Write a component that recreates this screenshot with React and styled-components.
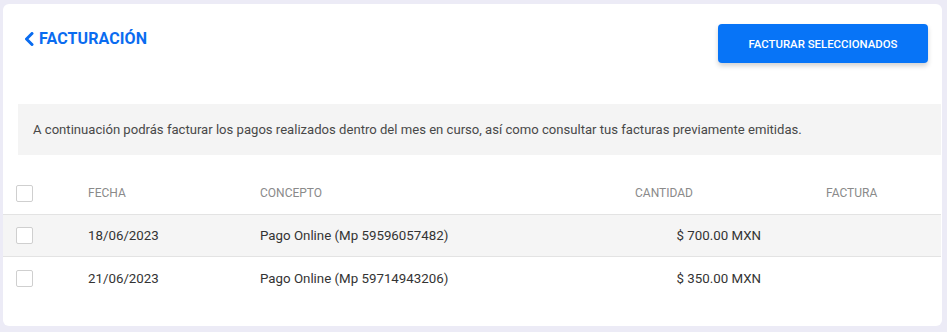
import React from "react";
import styled, { createGlobalStyle } from "styled-components";

const Global = createGlobalStyle`
  html, body { margin: 0; padding: 0; background: #ecebf6; }
  body { font-family: Roboto, "Noto Sans", sans-serif; }
  * { box-sizing: border-box; }
`;

const Page = styled.div`
  padding: 4px 5px 6px 3px;
  height: 332px;
`;

const Card = styled.div`
  background: #fff;
  border-radius: 6px;
  height: 322px;
  padding-top: 20px;
  overflow: hidden;
`;

const Top = styled.div`
  display: flex;
  justify-content: space-between;
  align-items: flex-start;
  padding: 0 14px 0 21px;
  height: 80px;
`;

const Title = styled.a`
  display: flex;
  align-items: center;
  gap: 5px;
  margin-top: 5px;
  color: #0a6cf0;
  font-weight: 700;
  font-size: 16px;
  letter-spacing: 0.1px;
  text-decoration: none;
`;

const Button = styled.button`
  width: 210px;
  height: 39px;
  border: none;
  border-radius: 4px;
  background: #0774f7;
  color: #fff;
  font-family: inherit;
  font-size: 11.4px;
  font-weight: 500;
  box-shadow: 0 3px 5px rgba(0, 0, 0, 0.18);
`;

const Info = styled.div`
  margin: 0 1px 0 15px;
  background: #f4f4f4;
  height: 51px;
  display: flex;
  align-items: center;
  padding-left: 15px;
  font-size: 13.1px;
  color: #484848;
`;

const Table = styled.div`
  margin-top: 22px;
  margin-right: 1px;
`;

const Row = styled.div`
  display: grid;
  grid-template-columns: 72px 172px 310px 191px 1fr;
  align-items: center;
  height: ${(p) => (p.$head ? "38px" : "42px")};
  padding-left: 13px;
  padding-bottom: ${(p) => (p.$head ? "5px" : "0")};
  background: ${(p) => (p.$shade ? "#f5f5f5" : "#fff")};
  border-bottom: ${(p) => (p.$last ? "none" : "1px solid #e3e3e3")};
  font-size: ${(p) => (p.$head ? "12px" : "13.3px")};
  color: ${(p) => (p.$head ? "#8a8a8a" : "#333")};
`;

const Cell = styled.div`
  padding-left: ${(p) => p.$indent || 0}px;
`;

const AmountCell = styled.div`
  display: flex;
  justify-content: ${(p) => (p.$head ? "flex-start" : "flex-end")};
  padding-left: ${(p) => (p.$head ? "65px" : "0")};
`;

const Box = styled.span`
  display: block;
  width: 17px;
  height: 17px;
  border: 1px solid #cfcfcf;
  border-radius: 2px;
  background: #fff;
`;

const rows = [
  { fecha: "18/06/2023", concepto: "Pago Online (Mp 59596057482)", cantidad: "$ 700.00 MXN" },
  { fecha: "21/06/2023", concepto: "Pago Online (Mp 59714943206)", cantidad: "$ 350.00 MXN" },
];

export default function App() {
  return (
    <>
      <Global />
      <Page>
        <Card>
          <Top>
            <Title href="#">
              <svg width="10" height="14" viewBox="0 0 10 14">
                <path d="M8 1.5 L2.5 7 L8 12.5" fill="none" stroke="#0a6cf0" strokeWidth="3" strokeLinejoin="round" strokeLinecap="round" />
              </svg>
              FACTURACIÓN
            </Title>
            <Button>FACTURAR SELECCIONADOS</Button>
          </Top>
          <Info>
            A continuación podrás facturar los pagos realizados dentro del mes en curso, así como consultar tus facturas previamente emitidas.
          </Info>
          <Table>
            <Row $head>
              <Cell><Box /></Cell>
              <Cell>FECHA</Cell>
              <Cell>CONCEPTO</Cell>
              <AmountCell $head>CANTIDAD</AmountCell>
              <Cell $indent={65}>FACTURA</Cell>
            </Row>
            {rows.map((r, i) => (
              <Row key={r.fecha} $shade={i === 0} $last={i === rows.length - 1}>
                <Cell><Box /></Cell>
                <Cell>{r.fecha}</Cell>
                <Cell>{r.concepto}</Cell>
                <AmountCell>{r.cantidad}</AmountCell>
                <Cell />
              </Row>
            ))}
          </Table>
        </Card>
      </Page>
    </>
  );
}
